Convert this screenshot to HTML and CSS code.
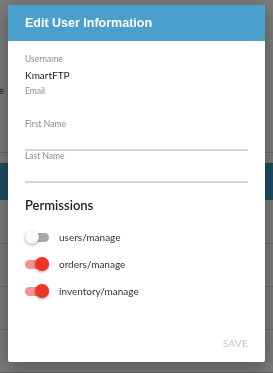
FILE: index.html
```html
<!DOCTYPE html>
<html lang="en">
<head>
    <meta charset="UTF-8">
    <meta name="viewport" content="width=device-width, initial-scale=1.0">
    <title>Edit User Information</title>
    <link rel="stylesheet" href="styles.css">
</head>
<body>
    <div class="page">
        <div class="page-top">
            <span class="page-text">Name</span>
        </div>
        <div class="page-gap"></div>
        <div class="page-band"></div>
        <div class="page-row tall"></div>
        <div class="page-row"></div>
        <div class="page-row"></div>
        <div class="page-row"></div>
    </div>

    <div class="overlay">
        <div class="dialog">
            <header class="dialog-header">Edit User Information</header>
            <div class="dialog-body">
                <div class="field-label">Username</div>
                <div class="field-value">KmartFTP</div>
                <div class="field-label email">Email</div>

                <div class="input-field first">
                    <label class="input-label">First Name</label>
                    <div class="input-line"></div>
                </div>
                <div class="input-field">
                    <label class="input-label">Last Name</label>
                    <div class="input-line"></div>
                </div>

                <h2 class="section-title">Permissions</h2>
                <div class="perm-list">
                    <div class="perm">
                        <span class="switch"><span class="thumb"></span></span>
                        <span class="perm-name">users/manage</span>
                    </div>
                    <div class="perm">
                        <span class="switch on"><span class="thumb"></span></span>
                        <span class="perm-name">orders/manage</span>
                    </div>
                    <div class="perm">
                        <span class="switch on"><span class="thumb"></span></span>
                        <span class="perm-name">inventory/manage</span>
                    </div>
                </div>
            </div>
            <div class="dialog-actions">
                <button class="save-button" disabled>SAVE</button>
            </div>
        </div>
    </div>
</body>
</html>
```

FILE: styles.css
```css
body {
    margin: 0;
    font-family: Lato, 'Liberation Sans', sans-serif;
    background: #f4f4f4;
    overflow: hidden;
    height: 373px;
}
.page {
    display: flex;
    flex-direction: column;
}
.page-top {
    height: 153px;
    border-bottom: 1px solid #ccc;
    display: flex;
    align-items: center;
    box-sizing: border-box;
}
.page-text {
    font-size: 10px;
    color: #333;
    margin-left: -22px;
    margin-top: 27px;
}
.page-gap {
    height: 10px;
}
.page-band {
    height: 37px;
    background: #3b97c4;
}
.page-row {
    height: 42px;
    border-bottom: 1px solid #ccc;
}
.page-row.tall {
    height: 43px;
}
.overlay {
    position: fixed;
    top: 0;
    left: 0;
    right: 0;
    bottom: 0;
    background: rgba(0, 0, 0, 0.5);
    display: flex;
    justify-content: center;
    align-items: flex-start;
}
.dialog {
    margin-top: 5px;
    width: 257px;
    height: 357px;
    background: white;
    border-radius: 2px;
    box-shadow: 0 6px 20px rgba(0, 0, 0, 0.3);
    display: flex;
    flex-direction: column;
    overflow: hidden;
}
.dialog-header {
    background: #4a9fcc;
    color: white;
    font-family: 'Liberation Sans', Arial, sans-serif;
    font-weight: bold;
    font-size: 12.5px;
    height: 36px;
    padding: 0 17px;
    display: flex;
    align-items: center;
    flex-shrink: 0;
}
.dialog-body {
    padding: 12px 17px 0;
    flex: 1;
}
.field-label {
    font-size: 8.5px;
    color: #8a8a8a;
    line-height: 12px;
}
.field-label.email {
    margin-top: 3px;
}
.field-value {
    font-size: 10px;
    color: #222;
    line-height: 14px;
    margin-top: 3px;
}
.input-field.first {
    margin-top: 22px;
}
.input-label {
    display: block;
    font-size: 8.5px;
    color: #8a8a8a;
    line-height: 10px;
}
.input-line {
    height: 2px;
    margin-top: 20px;
    background: #d6d6d6;
}
.section-title {
    margin: 14px 0 0;
    font-size: 13px;
    font-weight: 600;
    color: #222;
    line-height: 16px;
}
.perm-list {
    margin-top: 16px;
    display: flex;
    flex-direction: column;
    gap: 11px;
}
.perm {
    display: flex;
    align-items: center;
    height: 16px;
    gap: 10px;
}
.switch {
    position: relative;
    width: 24px;
    height: 9px;
    border-radius: 5px;
    background: #a8a8a8;
    flex-shrink: 0;
}
.switch .thumb {
    position: absolute;
    top: -2.5px;
    left: 0;
    width: 14px;
    height: 14px;
    border-radius: 50%;
    background: #fafafa;
    box-shadow: 0 1px 3px rgba(0, 0, 0, 0.35);
}
.switch.on {
    background: #f4928c;
}
.switch.on .thumb {
    left: 10px;
    background: #ee3427;
}
.perm-name {
    font-size: 10px;
    color: #333;
    line-height: 16px;
}
.dialog-actions {
    display: flex;
    justify-content: flex-end;
    padding: 0 17px 13px;
}
.save-button {
    background: none;
    border: none;
    padding: 0;
    font-family: Lato, 'Liberation Sans', sans-serif;
    font-size: 10px;
    line-height: 12px;
    color: #c4c4c4;
    letter-spacing: 0.3px;
}
```
